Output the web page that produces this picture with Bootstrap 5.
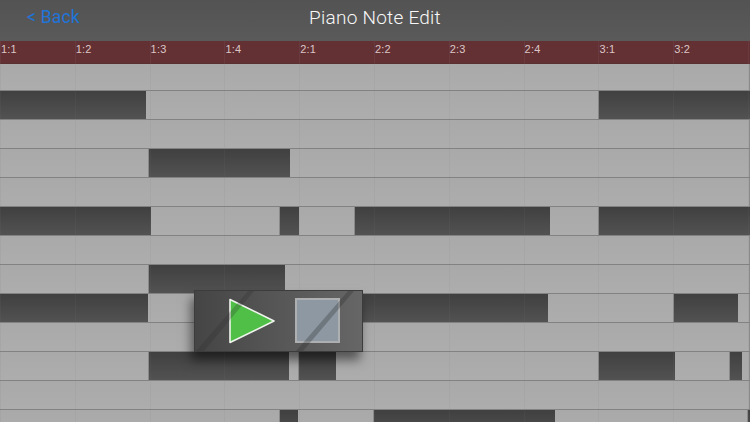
<!DOCTYPE html>
<html lang="en">
<head>
<meta charset="utf-8">
<title>Piano Note Edit</title>
<link rel="stylesheet" href="https://cdn.jsdelivr.net/npm/bootstrap@5.3.0/dist/css/bootstrap.min.css">
<style>
html,body{width:750px;height:422px;overflow:hidden;background:#ababab;margin:0}
.stage{width:750px;height:422px;overflow:hidden}
.topbar{height:41px;background:linear-gradient(#535353,#5a5a5a);font-family:"Roboto","Liberation Sans",sans-serif}
.back-link{left:27px;top:7px;font-size:17.5px;line-height:21px;color:#1f74d8;font-weight:400;letter-spacing:.2px;text-decoration:none}
.page-title{font-size:19px;line-height:22px;color:#f8f8f8;font-weight:300;letter-spacing:.25px;padding-top:7px}
.ruler{height:23px;background:#633033;box-shadow:inset 0 -1px 0 #5a3033}
.beat{width:74.8px;padding-left:0;font:11px/14px "Liberation Sans",sans-serif;letter-spacing:.2px;color:#dcc6c6;padding-top:1px;border-left:1px solid #693a3d}
.lanes{background:#828282}
.lane{height:29px}
.lane-first{height:27px}
.seg-on{height:28px;background:linear-gradient(#a9a9a9,#adadad);box-shadow:inset -1px 0 0 #8a8a8a}
.seg-off{height:28px;background:linear-gradient(#404040,#525252)}
.beat-lines{left:0;top:64px;width:750px;height:358px;background:repeating-linear-gradient(90deg,rgba(120,120,120,.1) 0,rgba(120,120,120,.1) 1px,transparent 1px,transparent 74.8px);pointer-events:none}
.pad{left:194px;top:290px;width:169px;height:62px;background:linear-gradient(90deg,#454545,#555 45%,#666);border:1px solid #3c3c3c;box-shadow:-3px 8px 10px rgba(0,0,0,.5);gap:18px;padding:7px 0 0 34px}
.tri{width:48px;height:46px;flex:none}
.halt{width:45px;height:45px;flex:none;background:#8d98a3;border:2px solid #adafb1}
.gloss{left:0;top:0;width:167px;height:60px;pointer-events:none}
</style>
</head>
<body>
<div class="stage position-relative">
  <div class="topbar position-relative text-center">
    <a class="back-link position-absolute" href="#">&lt; Back</a>
    <div class="page-title">Piano Note Edit</div>
  </div>
  <div class="ruler d-flex">
    <div class="beat flex-shrink-0">1:1</div><div class="beat flex-shrink-0">1:2</div><div class="beat flex-shrink-0">1:3</div><div class="beat flex-shrink-0">1:4</div><div class="beat flex-shrink-0">2:1</div><div class="beat flex-shrink-0">2:2</div><div class="beat flex-shrink-0">2:3</div><div class="beat flex-shrink-0">2:4</div><div class="beat flex-shrink-0">3:1</div><div class="beat flex-shrink-0">3:2</div><div class="beat flex-shrink-0"></div>
  </div>
  <div class="lanes">
    <div class="lane lane-first d-flex"><div class="seg-on w-100" style="height:26px"></div></div>
    <div class="lane d-flex"><div class="seg-off" style="width:146px"></div><div class="seg-on" style="width:453px"></div><div class="seg-off" style="width:151px"></div></div>
    <div class="lane d-flex"><div class="seg-on w-100"></div></div>
    <div class="lane d-flex"><div class="seg-on" style="width:149px"></div><div class="seg-off" style="width:141px"></div><div class="seg-on" style="width:460px"></div></div>
    <div class="lane d-flex"><div class="seg-on w-100"></div></div>
    <div class="lane d-flex"><div class="seg-off" style="width:151px"></div><div class="seg-on" style="width:129px"></div><div class="seg-off" style="width:19px"></div><div class="seg-on" style="width:56px"></div><div class="seg-off" style="width:195px"></div><div class="seg-on" style="width:49px"></div><div class="seg-off" style="width:151px"></div></div>
    <div class="lane d-flex"><div class="seg-on w-100"></div></div>
    <div class="lane d-flex"><div class="seg-on" style="width:149px"></div><div class="seg-off" style="width:136px"></div><div class="seg-on" style="width:465px"></div></div>
    <div class="lane d-flex"><div class="seg-off" style="width:148px"></div><div class="seg-on" style="width:152px"></div><div class="seg-off" style="width:248px"></div><div class="seg-on" style="width:126px"></div><div class="seg-off" style="width:64px"></div><div class="seg-on" style="width:12px"></div></div>
    <div class="lane d-flex"><div class="seg-on w-100"></div></div>
    <div class="lane d-flex"><div class="seg-on" style="width:149px"></div><div class="seg-off" style="width:140px"></div><div class="seg-on" style="width:10px"></div><div class="seg-off" style="width:37px"></div><div class="seg-on" style="width:263px"></div><div class="seg-off" style="width:76px"></div><div class="seg-on" style="width:55px"></div><div class="seg-off" style="width:12px"></div><div class="seg-on" style="width:8px"></div></div>
    <div class="lane d-flex"><div class="seg-on w-100"></div></div>
    <div class="lane d-flex"><div class="seg-on" style="width:280px"></div><div class="seg-off" style="width:18px"></div><div class="seg-on" style="width:76px"></div><div class="seg-off" style="width:181px"></div><div class="seg-on" style="width:193px"></div><div class="seg-off" style="width:2px"></div></div>
  </div>
  <div class="beat-lines position-absolute"></div>
  <div class="pad position-absolute d-flex align-items-start">
    <svg class="tri" viewBox="0 0 48 46" aria-hidden="true"><polygon points="1,1.5 45,23 1,44.5" fill="#4fbf47" stroke="#f0f4ee" stroke-width="1.6" stroke-linejoin="round"/></svg>
    <div class="halt"></div>
    <svg class="gloss position-absolute" viewBox="0 0 167 60" aria-hidden="true"><polygon points="53,0 59,0 9,60 1,60" fill="#2c2c2c" fill-opacity=".25"/><polygon points="153,0 159,0 108,60 101,60" fill="#2c2c2c" fill-opacity=".3"/></svg>
  </div>
</div>
<script src="https://cdn.jsdelivr.net/npm/bootstrap@5.3.0/dist/js/bootstrap.bundle.min.js"></script>
</body>
</html>
